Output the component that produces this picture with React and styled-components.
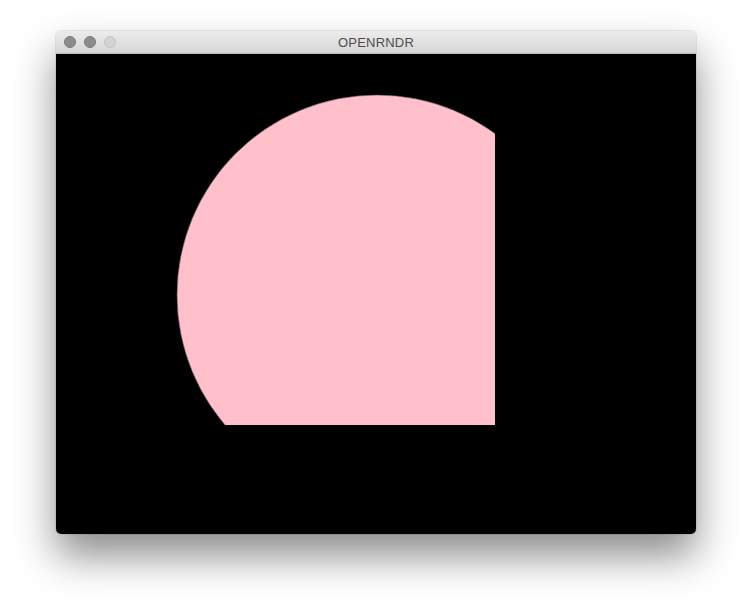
import React from 'react'
import styled, { createGlobalStyle } from 'styled-components'

const GlobalStyle = createGlobalStyle`
  html, body {
    margin: 0;
    background: #ffffff;
    font-family: "Liberation Sans", Arial, sans-serif;
  }
`

const Page = styled.div`
  width: 752px;
  height: 614px;
  display: flex;
  justify-content: center;
  align-items: flex-start;
  padding-top: 31px;
  box-sizing: border-box;
  overflow: hidden;
`

const Window = styled.div`
  width: 640px;
  display: flex;
  flex-direction: column;
  border-radius: 5px;
  overflow: hidden;
  box-shadow: 0 22px 40px rgba(0, 0, 0, 0.45), 0 0 0 1px rgba(0, 0, 0, 0.08);
`

const TitleBar = styled.div`
  height: 23px;
  position: relative;
  display: flex;
  align-items: center;
  justify-content: center;
  background: linear-gradient(#ececec, #d5d5d5);
  border-bottom: 1px solid #b9b9b9;
  box-sizing: border-box;
`

const Lights = styled.div`
  position: absolute;
  left: 8px;
  top: 5px;
  display: flex;
  gap: 8px;
`

const Light = styled.span`
  width: 12px;
  height: 12px;
  border-radius: 50%;
  box-sizing: border-box;
  background: ${(p) => (p.$off ? '#d3d3d3' : '#8b8b8e')};
  border: 1px solid ${(p) => (p.$off ? '#c2c2c2' : '#7a7a7d')};
`

const Title = styled.span`
  font-size: 13px;
  color: #4d4d4d;
  letter-spacing: 0.2px;
`

const Canvas = styled.svg`
  display: block;
  width: 640px;
  height: 480px;
  background: #000000;
`

export default function App() {
  return (
    <>
      <GlobalStyle />
      <Page>
        <Window>
          <TitleBar>
            <Lights>
              <Light />
              <Light />
              <Light $off />
            </Lights>
            <Title>OPENRNDR</Title>
          </TitleBar>
          <Canvas viewBox="0 0 640 480">
            <defs>
              <clipPath id="clip">
                <rect x="0" y="0" width="439" height="371" />
              </clipPath>
            </defs>
            <circle cx="321" cy="241" r="200" fill="#ffc0cb" stroke="#555" strokeWidth="0.6" clipPath="url(#clip)" />
          </Canvas>
        </Window>
      </Page>
    </>
  )
}
